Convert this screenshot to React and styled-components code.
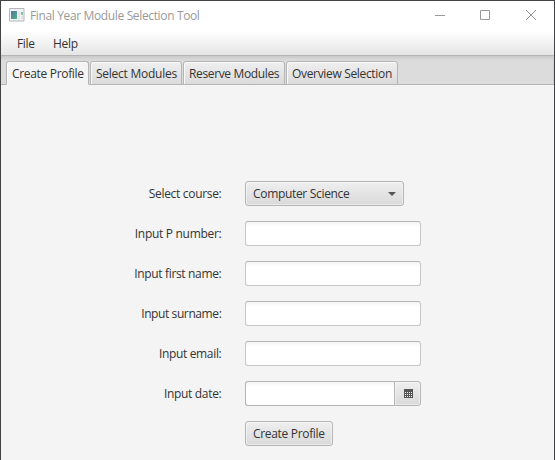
import React from "react";
import styled, { createGlobalStyle } from "styled-components";

const GlobalStyle = createGlobalStyle`
  * { box-sizing: border-box; }
  body { margin: 0; background: #f4f4f4; }
`;

const Window = styled.div`
  width: 555px;
  height: 460px;
  overflow: hidden;
  display: flex;
  flex-direction: column;
  background: #f4f4f4;
  border: 1px solid #434244;
  border-bottom: 0;
  color: #333;
  font: 12px/16px "Open Sans", "Noto Sans", sans-serif;
  white-space: nowrap;
`;

const Label = styled.span`
  display: block;
  letter-spacing: ${(p) => p.$track ?? -0.32}px;
`;

const TitleBar = styled.header`
  display: flex;
  align-items: center;
  height: 30px;
  flex: none;
  padding-left: 8px;
  background: #fff;
  color: #999;
`;

const AppIcon = styled.svg`
  width: 16px;
  height: 14px;
  margin: 0 5px 2px 0;
`;

const Controls = styled.div`
  display: flex;
  margin-left: auto;
`;

const Control = styled.svg`
  width: 46px;
  height: 30px;
  fill: none;
  stroke: #999;
`;

const MenuBar = styled.nav`
  display: flex;
  flex: none;
  gap: 18px;
  height: 25px;
  padding: 5px 16px 0;
  background: linear-gradient(#fff, #e5e5e5);
  border-bottom: 1px solid #b5b5b5;
`;

const MenuItem = styled(Label)`
  width: ${(p) => p.$width}px;
`;

const TabStrip = styled.div`
  display: flex;
  flex: none;
  align-items: flex-end;
  gap: 1px;
  height: 29px;
  padding-left: 5px;
  background: linear-gradient(#c9c9c9, #dadada 4px, #dcdcdc 6px);
  box-shadow: inset 0 -1px #b5b5b5, inset -1px 0 #cfcfcf;
`;

const Tab = styled.div`
  width: ${(p) => p.$width}px;
  height: 24px;
  padding: 4px 0 0 5px;
  border: 1px solid #b5b5b5;
  border-bottom-color: ${(p) => (p.$active ? "#f4f4f4" : "#b5b5b5")};
  border-radius: 3px 3px 0 0;
  background: ${(p) => (p.$active ? "#f4f4f4" : "linear-gradient(#efefef, #dbdbdb)")};
  box-shadow: inset 1px 1px #fafafa;
`;

const Form = styled.main`
  display: grid;
  grid-template-columns: 221px 176px;
  grid-auto-rows: 25px;
  column-gap: 23px;
  row-gap: 15px;
  padding-top: 96px;
`;

const FieldLabel = styled(Label)`
  justify-self: end;
  padding: 5px 0.6px 0 0;
`;

const Input = styled.div`
  width: 176px;
  height: 25px;
  border: 1px solid #c6c6c6;
  border-top-color: #b5b5b5;
  border-radius: 3px;
  background: linear-gradient(#f3f3f3, #fff 5px);
`;

const Button = styled.div`
  display: flex;
  align-items: center;
  justify-content: space-between;
  width: ${(p) => p.$width}px;
  height: 25px;
  padding: 0 7px;
  border: 1px solid #b5b5b5;
  border-radius: 3px;
  background: linear-gradient(#efefef, #d9d9d9);
  box-shadow: inset 0 0 0 1px rgba(255, 255, 255, 0.45);
`;

const SubmitButton = styled(Button)`
  grid-column: 2;
`;

const DateField = styled.div`
  display: flex;
  width: 176px;
`;

const DateInput = styled(Input)`
  width: 149px;
  border-right: 0;
  border-radius: 3px 0 0 3px;
  border-color: #b5b5b5;
`;

const DateButton = styled(Button)`
  padding: 0 0 0 9px;
  border-radius: 0 3px 3px 0;
`;

const Arrow = () => (
  <svg width="8" height="4" viewBox="0 0 8 4">
    <path d="M0 0H8L4 4Z" fill="#555" />
  </svg>
);

const dots = [3, 5, 7].flatMap((y) => [1, 3, 5, 7].map((x) => [x, y]));

const Calendar = () => (
  <svg width="9" height="9" viewBox="0 0 9 9" shapeRendering="crispEdges">
    <path d="M0 0H9V9H0Z" fill="#555" />
    {dots.map(([x, y]) => (
      <rect key={`${x}-${y}`} x={x} y={y} width="1" height="1" fill="#f0f0f0" />
    ))}
  </svg>
);

const tabs = [
  ["Create Profile", 83, -0.32],
  ["Select Modules", 92, -0.25],
  ["Reserve Modules", 102, -0.36],
  ["Overview Selection", 112, -0.33],
];

const textFields = [
  ["Input P number:", -0.3],
  ["Input first name:", -0.34],
  ["Input surname:", -0.4],
  ["Input email:", -0.34],
];

export default function App() {
  return (
    <>
      <GlobalStyle />
      <Window>
        <TitleBar>
          <AppIcon viewBox="0 0 16 14">
            <defs>
              <linearGradient id="pane" x1="0" y1="0" x2="1" y2="1">
                <stop offset="0" stopColor="#5276a8" />
                <stop offset="1" stopColor="#4fae7c" />
              </linearGradient>
              <linearGradient id="preview" x1="0" y1="0" x2="1" y2="1">
                <stop offset="0" stopColor="#8fb0d0" />
                <stop offset="1" stopColor="#8cc49b" />
              </linearGradient>
            </defs>
            <path d="M.5 .5H15V13H.5Z" fill="#f1f2f3" stroke="#b2b6ba" />
            <path d="M2 3H8V11H2Z" fill="url(#pane)" />
            <path d="M9 3H11V11H9Z" fill="#e2e5e8" />
            <path d="M12 4H14V7H12Z" fill="url(#preview)" />
            <path d="M12 8H14V11H12Z" fill="#dfe2e4" />
          </AppIcon>
          <Label $track={-0.36}>Final Year Module Selection Tool</Label>
          <Controls>
            <Control><path d="M19 14.5H29" /></Control>
            <Control><path d="M18.5 9.5H27.5V18.5H18.5Z" /></Control>
            <Control><path d="M18 9L28 19M28 9L18 19" /></Control>
          </Controls>
        </TitleBar>
        <MenuBar>
          <MenuItem $width={18}>File</MenuItem>
          <MenuItem $width={25}>Help</MenuItem>
        </MenuBar>
        <TabStrip>
          {tabs.map(([name, width, track], i) => (
            <Tab key={name} $width={width} $active={i === 0}>
              <Label $track={track}>{name}</Label>
            </Tab>
          ))}
        </TabStrip>
        <Form>
          <FieldLabel>Select course:</FieldLabel>
          <Button $width={159}>
            <Label>Computer Science</Label>
            <Arrow />
          </Button>
          {textFields.map(([name, track]) => (
            <React.Fragment key={name}>
              <FieldLabel $track={track}>{name}</FieldLabel>
              <Input />
            </React.Fragment>
          ))}
          <FieldLabel>Input date:</FieldLabel>
          <DateField>
            <DateInput />
            <DateButton $width={27}>
              <Calendar />
            </DateButton>
          </DateField>
          <SubmitButton $width={88}>
            <Label>Create Profile</Label>
          </SubmitButton>
        </Form>
      </Window>
    </>
  );
}
